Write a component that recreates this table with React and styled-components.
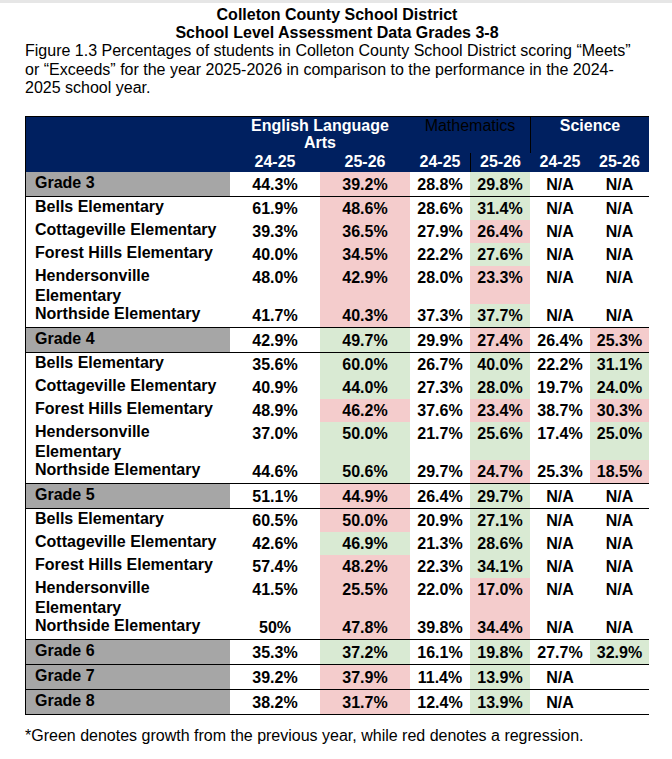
import React from 'react';
import styled, {createGlobalStyle} from 'styled-components';

const GlobalStyle = createGlobalStyle`
    body {
        margin: 0;
        background: #fff;
        font-family: "Liberation Sans", Arial, sans-serif;
        color: #000;
    }
`;

const rows = [
    {type: 'grade', name: 'Grade 3', v: ['44.3%', '39.2%', '28.8%', '29.8%', 'N/A', 'N/A'], t: ['', 'r', '', 'g', '', '']},
    {name: 'Bells Elementary', v: ['61.9%', '48.6%', '28.6%', '31.4%', 'N/A', 'N/A'], t: ['', 'r', '', 'g', '', '']},
    {name: 'Cottageville Elementary', v: ['39.3%', '36.5%', '27.9%', '26.4%', 'N/A', 'N/A'], t: ['', 'r', '', 'r', '', '']},
    {name: 'Forest Hills Elementary', v: ['40.0%', '34.5%', '22.2%', '27.6%', 'N/A', 'N/A'], t: ['', 'r', '', 'g', '', '']},
    {name: 'Hendersonville', wrap: true, v: ['48.0%', '42.9%', '28.0%', '23.3%', 'N/A', 'N/A'], t: ['', 'r', '', 'r', '', '']},
    {name: 'Northside Elementary', last: true, v: ['41.7%', '40.3%', '37.3%', '37.7%', 'N/A', 'N/A'], t: ['', 'r', '', 'g', '', '']},

    {type: 'grade', name: 'Grade 4', v: ['42.9%', '49.7%', '29.9%', '27.4%', '26.4%', '25.3%'], t: ['', 'g', '', 'r', '', 'r']},
    {name: 'Bells Elementary', v: ['35.6%', '60.0%', '26.7%', '40.0%', '22.2%', '31.1%'], t: ['', 'g', '', 'g', '', 'g']},
    {name: 'Cottageville Elementary', v: ['40.9%', '44.0%', '27.3%', '28.0%', '19.7%', '24.0%'], t: ['', 'g', '', 'g', '', 'g']},
    {name: 'Forest Hills Elementary', v: ['48.9%', '46.2%', '37.6%', '23.4%', '38.7%', '30.3%'], t: ['', 'r', '', 'r', '', 'r']},
    {name: 'Hendersonville', wrap: true, v: ['37.0%', '50.0%', '21.7%', '25.6%', '17.4%', '25.0%'], t: ['', 'g', '', 'g', '', 'g']},
    {name: 'Northside Elementary', last: true, v: ['44.6%', '50.6%', '29.7%', '24.7%', '25.3%', '18.5%'], t: ['', 'g', '', 'r', '', 'r']},

    {type: 'grade', name: 'Grade 5', v: ['51.1%', '44.9%', '26.4%', '29.7%', 'N/A', 'N/A'], t: ['', 'r', '', 'g', '', '']},
    {name: 'Bells Elementary', v: ['60.5%', '50.0%', '20.9%', '27.1%', 'N/A', 'N/A'], t: ['', 'r', '', 'g', '', '']},
    {name: 'Cottageville Elementary', v: ['42.6%', '46.9%', '21.3%', '28.6%', 'N/A', 'N/A'], t: ['', 'g', '', 'g', '', '']},
    {name: 'Forest Hills Elementary', v: ['57.4%', '48.2%', '22.3%', '34.1%', 'N/A', 'N/A'], t: ['', 'r', '', 'g', '', '']},
    {name: 'Hendersonville', wrap: true, v: ['41.5%', '25.5%', '22.0%', '17.0%', 'N/A', 'N/A'], t: ['', 'r', '', 'r', '', '']},
    {name: 'Northside Elementary', last: true, v: ['50%', '47.8%', '39.8%', '34.4%', 'N/A', 'N/A'], t: ['', 'r', '', 'r', '', '']},

    {type: 'grade', name: 'Grade 6', v: ['35.3%', '37.2%', '16.1%', '19.8%', '27.7%', '32.9%'], t: ['', 'g', '', 'g', '', 'g']},
    {type: 'grade', name: 'Grade 7', v: ['39.2%', '37.9%', '11.4%', '13.9%', 'N/A', ''], t: ['', 'r', '', 'g', '', '']},
    {type: 'grade', name: 'Grade 8', v: ['38.2%', '31.7%', '12.4%', '13.9%', 'N/A', ''], t: ['', 'r', '', 'g', '', '']},
];

const tones = {r: '#f4cccc', g: '#d9ead3', '': 'transparent'};

const rowHeight = (r) => {
    if (r.type === 'grade') return 24;
    if (r.wrap) return 38;
    return 23;
};

const App = () => {
    return (
        <Page>
            <GlobalStyle/>
            <TopBand/>
            <Wrap>
                <Title>Colleton County School District<br/>School Level Assessment Data Grades 3-8</Title>
                <Caption>
                    Figure 1.3 Percentages of students in Colleton County School District scoring “Meets”<br/>
                    or “Exceeds” for the year 2025-2026 in comparison to the performance in the 2024-<br/>
                    2025 school year.
                </Caption>

                <Table>
                    <Head>
                        <HeadTop>
                            <span/>
                            <Subject>English Language<br/>Arts</Subject>
                            <Subject $plain>Mathematics</Subject>
                            <Subject $line>Science</Subject>
                        </HeadTop>
                        <HeadYears>
                            <span/>
                            <Year>24-25</Year>
                            <Year>25-26</Year>
                            <Year>24-25</Year>
                            <Year $line>25-26</Year>
                            <Year>24-25</Year>
                            <Year>25-26</Year>
                        </HeadYears>
                    </Head>

                    {rows.map((r, i) => (
                        <Row key={i} $h={rowHeight(r)} $grade={r.type === 'grade'} $last={r.last}>
                            <Label $grade={r.type === 'grade'} $wrap={r.wrap}>
                                {r.wrap ? <>{r.name}<br/>Elementary</> : r.name}
                            </Label>
                            {r.v.map((val, j) => (
                                <Value key={j} $tone={tones[r.t[j]]} $grade={r.type === 'grade'}>{val}</Value>
                            ))}
                        </Row>
                    ))}
                </Table>

                <Note>*Green denotes growth from the previous year, while red denotes a regression.</Note>
            </Wrap>
        </Page>
    )
}

const Page = styled.div`
    width: 672px;
    min-height: 759px;
    background: #fff;
`;

const TopBand = styled.div`
    height: 3px;
    background: #e6e6e6;
`;

const Wrap = styled.div`
    width: 624px;
    margin-left: 25px;
    padding-top: 3px;
    font-size: 16px;
`;

const Title = styled.div`
    text-align: center;
    font-weight: bold;
    line-height: 18px;
`;

const Caption = styled.div`
    line-height: 18.5px;
    margin-bottom: 18px;
`;

const Table = styled.div`
    border-left: 1px solid #000;
    font-weight: bold;
`;

const Head = styled.div`
    background: #002060;
    color: #fff;
    border-top: 1px solid #000;
`;

const HeadTop = styled.div`
    display: grid;
    grid-template-columns: 204px 180px 120px 1fr;
    height: 36px;
`;

const Subject = styled.div`
    text-align: center;
    line-height: 17px;
    font-weight: ${p => p.$plain ? 'normal' : 'bold'};
    color: ${p => p.$plain ? '#000' : '#fff'};
    border-left: ${p => p.$line ? '1px solid #000' : 'none'};
`;

const HeadYears = styled.div`
    display: grid;
    grid-template-columns: 204px 90px 90px 60px 60px 60px 1fr;
    height: 19px;
`;

const Year = styled.div`
    text-align: center;
    line-height: 17px;
    border-left: ${p => p.$line ? '1px solid #000' : 'none'};
`;

const Row = styled.div`
    display: grid;
    grid-template-columns: 204px 90px 90px 60px 60px 60px 1fr;
    height: ${p => p.$h}px;
    border-bottom: ${p => (p.$grade || p.$last) ? '1px solid #000' : 'none'};
`;

const Label = styled.div`
    padding-left: 9px;
    line-height: ${p => p.$grade ? '18px' : p.$wrap ? '20px' : '19px'};
    padding-top: ${p => p.$grade ? '2px' : '0'};
    background: ${p => p.$grade ? '#a6a6a6' : 'transparent'};
    white-space: nowrap;
`;

const Value = styled.div`
    text-align: center;
    line-height: 18px;
    padding-top: ${p => p.$grade ? '4px' : '3px'};
    background: ${p => p.$tone};
`;

const Note = styled.div`
    margin-top: 12px;
    line-height: 18px;
`;

export default App;
